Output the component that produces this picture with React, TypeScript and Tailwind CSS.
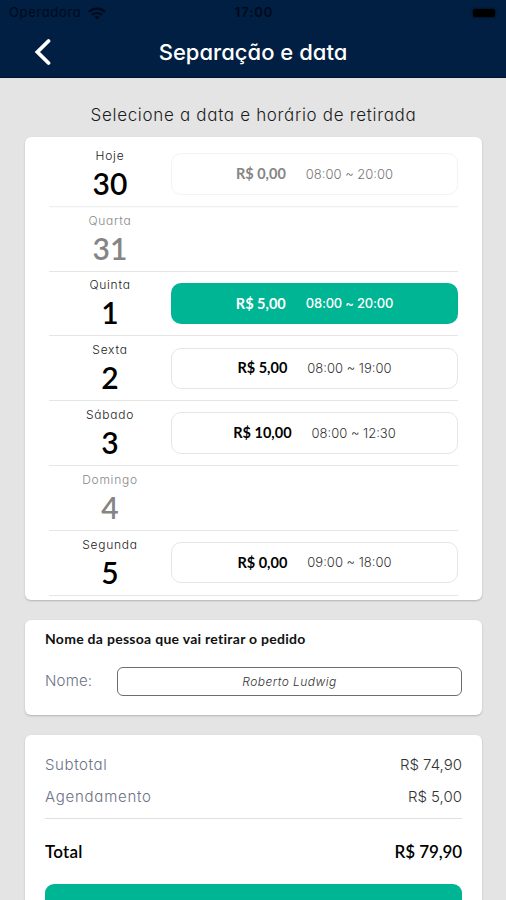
import React from "react";

type Slot = { price: string; hours: string; state?: "past" | "selected" };
type Day = { name: string; number: number; slot?: Slot };

const days: Day[] = [
  { name: "Hoje", number: 30, slot: { price: "R$ 0,00", hours: "08:00 ~ 20:00", state: "past" } },
  { name: "Quarta", number: 31 },
  { name: "Quinta", number: 1, slot: { price: "R$ 5,00", hours: "08:00 ~ 20:00", state: "selected" } },
  { name: "Sexta", number: 2, slot: { price: "R$ 5,00", hours: "08:00 ~ 19:00" } },
  { name: "Sábado", number: 3, slot: { price: "R$ 10,00", hours: "08:00 ~ 12:30" } },
  { name: "Domingo", number: 4 },
  { name: "Segunda", number: 5, slot: { price: "R$ 0,00", hours: "09:00 ~ 18:00" } },
];

const slotStyles = {
  open: "border border-[#e6e6e6] text-black",
  past: "border border-[#f3f3f3] text-[#858585]",
  selected: "bg-[#00b594] text-white",
};

const hourStyles = {
  open: "font-light text-[#333]",
  past: "font-light text-[#777]",
  selected: "font-medium tracking-[-0.2px] text-white",
};

const StatusBar: React.FC = () => (
  <div className="grid h-[26px] grid-cols-3 items-center pl-[9px] pr-[11px] text-[13px] text-[#000a1c]">
    <div className="flex items-center gap-[7px]">
      <span className="tracking-[0.65px]">Operadora</span>
      <svg width="18" height="13" viewBox="0 0 18 13" fill="none" stroke="currentColor" strokeWidth="2.3">
        <path d="M1 4.8C5.5.6 12.5.6 17 4.8M4 8c2.9-2.6 7.1-2.6 10 0" />
        <path d="M9 12.5 6.5 10c1.4-1.2 3.6-1.2 5 0z" fill="currentColor" stroke="none" />
      </svg>
    </div>
    <span className="pl-1 text-center font-semibold tracking-[0.9px]">17:00</span>
    <div className="h-2 w-[22px] justify-self-end rounded-[2px] bg-black shadow-[0_0_2px_1px_rgba(0,0,0,0.35)]" />
  </div>
);

const Header: React.FC = () => (
  <header className="h-[78px] border-b border-[#00102f] bg-[#001f42]">
    <StatusBar />
    <div className="grid h-[52px] grid-cols-[1fr_auto_1fr] items-center">
      <button className="ml-[34px] w-[17px] text-white" aria-label="Voltar">
        <svg width="17" height="28" viewBox="0 0 17 28" fill="none" stroke="currentColor" strokeWidth="3.8" strokeLinecap="round">
          <path d="M14.5 3 3.4 14l11.1 11" strokeLinejoin="miter" />
        </svg>
      </button>
      <h1 className="text-[22px] font-medium tracking-[0.02px] text-white">Separação e data</h1>
    </div>
  </header>
);

const DayRow: React.FC<{ day: Day }> = ({ day }) => {
  const state = day.slot?.state ?? "open";
  return (
    <div className={`flex h-[64.8px] items-center border-b ${state === "past" ? "border-[#efefef] shadow-[0_1px_2px_-1px_#eee]" : "border-[#e6e6e6]"}`}>
      <div className={`flex w-[122px] flex-col items-center ${day.slot ? "text-black" : "text-[#858585]"}`}>
        <span className={`text-[12px] font-light leading-[18px] tracking-[0.75px] ${day.slot ? "text-[#222]" : "text-[#888]"}`}>
          {day.name}
        </span>
        <span className="font-[Lato] text-[30px] font-semibold leading-[36px]">{day.number}</span>
      </div>
      {day.slot && (
        <button className={`flex h-[41.5px] flex-1 items-center justify-center gap-5 rounded-[10px] ${slotStyles[state]}`}>
          <span className="font-[Lato] text-[14.5px] font-bold">{day.slot.price}</span>
          <span className={`pt-px text-[13px] ${hourStyles[state]}`}>{day.slot.hours}</span>
        </button>
      )}
    </div>
  );
};

const cardClass = "rounded-[6px] bg-white shadow-[0_1px_2px_rgba(0,0,0,0.22)]";

export default function App() {
  return (
    <div className="h-[900px] overflow-hidden bg-[#e4e4e4] font-[Inter,sans-serif] whitespace-nowrap [font-feature-settings:'cv11']">
      <Header />
      <main className="pl-[25px] pr-6">
        <h2 className="flex h-[59px] items-center justify-center pt-[17px] text-[17px] font-light tracking-[0.68px] text-[#1c1c1c]">
          Selecione a data e horário de retirada
        </h2>

        <section className={`h-[463px] px-6 pt-[5px] ${cardClass}`}>
          {days.map((day) => (
            <DayRow key={day.name} day={day} />
          ))}
        </section>

        <section className={`mt-5 h-[95px] px-5 pt-[9px] ${cardClass}`}>
          <h3 className="font-[Lato] text-[14px] font-bold leading-5 tracking-[0.28px] text-[#111]">
            Nome da pessoa que vai retirar o pedido
          </h3>
          <div className="mt-[18px] flex items-center">
            <span className="w-[72px] text-[15px] font-light tracking-[0.2px] text-[#6b7186]">Nome:</span>
            <div className="flex h-[29px] flex-1 items-center justify-center rounded-[6px] border border-[#6d6d6d] text-[12px] font-light italic tracking-[0.45px] text-[#333]">
              Roberto Ludwig
            </div>
          </div>
        </section>

        <section className={`mt-5 h-[200px] px-5 pt-[14px] ${cardClass}`}>
          <div className="flex h-8 items-center justify-between pt-px text-[15px] font-light text-[#6b7186]">
            <span className="tracking-[0.6px]">Subtotal</span>
            <span className="text-[#333]">R$ 74,90</span>
          </div>
          <div className="flex h-8 items-center justify-between pt-px text-[15px] font-light text-[#6b7186]">
            <span className="tracking-[0.75px]">Agendamento</span>
            <span className="text-[#333]">R$ 5,00</span>
          </div>
          <div className="mt-[5px] flex h-[66px] items-center justify-between border-t border-[#dde1e4] pt-px font-[Lato] text-[17px] font-semibold text-black">
            <span className="tracking-[0.2px]">Total</span>
            <span className="tracking-[-0.1px]">R$ 79,90</span>
          </div>
          <button className="h-12 w-full rounded-[9px] bg-[#00b594]" aria-label="Confirmar" />
        </section>
      </main>
    </div>
  );
}
